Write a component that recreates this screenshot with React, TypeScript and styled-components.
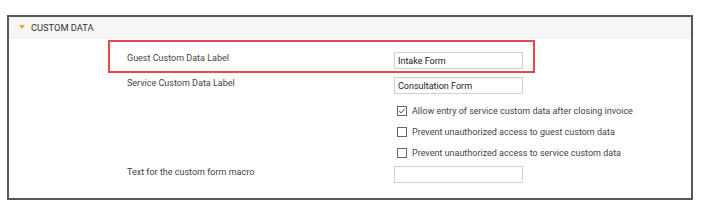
import React from "react";
import styled, { createGlobalStyle } from "styled-components";

const GlobalStyle = createGlobalStyle`
  body {
    margin: 0;
    background: #ffffff;
    font-family: Roboto, "Liberation Sans", Arial, sans-serif;
    color: #444;
  }
`;

const App = () => {
  return (
    <>
      <GlobalStyle />
      <Page>
        <Panel>
          <Header>
            <Caret />
            <Title>CUSTOM DATA</Title>
          </Header>
          <Body>
            <Row $highlight>
              <Label>Guest Custom Data Label</Label>
              <Input defaultValue="Intake Form" />
            </Row>
            <Row>
              <Label>Service Custom Data Label</Label>
              <Input defaultValue="Consultation Form" />
            </Row>
            <Checks>
              <CheckRow>
                <Box>
                  <svg width="8" height="8" viewBox="0 0 8 8">
                    <path d="M1.2 4 L3.1 5.9 L6.9 1.6" fill="none" stroke="#444" strokeWidth="1" />
                  </svg>
                </Box>
                <span>Allow entry of service custom data after closing invoice</span>
              </CheckRow>
              <CheckRow>
                <Box />
                <span>Prevent unauthorized access to guest custom data</span>
              </CheckRow>
              <CheckRow>
                <Box />
                <span>Prevent unauthorized access to service custom data</span>
              </CheckRow>
            </Checks>
            <Row $top={1}>
              <Label>Text for the custom form macro</Label>
              <Input defaultValue="" />
            </Row>
          </Body>
        </Panel>
      </Page>
    </>
  );
};

export default App;

const Page = styled.div`
  padding: 15px 0 0 7px;
`;

const Panel = styled.div`
  width: 686px;
  height: 185px;
  box-sizing: border-box;
  border: 2px solid #575757;
  background: #fff;
`;

const Header = styled.div`
  height: 20px;
  display: flex;
  align-items: center;
  padding-left: 10px;
  background: #f6f6f6;
  border-bottom: 1px solid #efefef;
`;

const Caret = styled.span`
  width: 0;
  height: 0;
  border-left: 3px solid transparent;
  border-right: 3px solid transparent;
  border-top: 4px solid #f0a030;
  margin-right: 6px;
`;

const Title = styled.span`
  font-size: 9.3px;
  color: #333;
`;

const Body = styled.div`
  display: flex;
  flex-direction: column;
  padding: 2px 0 0 99px;
`;

const Row = styled.div<{ $highlight?: boolean; $top?: number }>`
  width: 427px;
  box-sizing: border-box;
  border: 2px solid ${(p) => (p.$highlight ? "#e8474c" : "transparent")};
  display: grid;
  grid-template-columns: 267px 129px;
  align-items: start;
  padding: ${(p) => (p.$top ?? (p.$highlight ? 10 : 2))}px 0
    ${(p) => (p.$highlight ? "2px" : "0")} 17px;
`;

const Label = styled.div`
  font-size: 9px;
  line-height: 12px;
  color: #444;
`;

const Input = styled.input`
  width: 129px;
  height: 17px;
  box-sizing: border-box;
  border: 1px solid #d0d0d0;
  padding: 0 3px;
  font-family: Roboto, "Liberation Sans", Arial, sans-serif;
  font-size: 9px;
  color: #222;
  outline: none;
`;

const Checks = styled.div`
  display: flex;
  flex-direction: column;
  padding: 4px 0 0 289px;
`;

const CheckRow = styled.div`
  display: flex;
  align-items: center;
  gap: 5px;
  height: 21px;
  font-size: 9px;
  color: #444;
`;

const Box = styled.span`
  width: 8px;
  height: 8px;
  border: 1px solid #666;
  display: inline-flex;
  align-items: center;
  justify-content: center;
  background: #fff;
`;
